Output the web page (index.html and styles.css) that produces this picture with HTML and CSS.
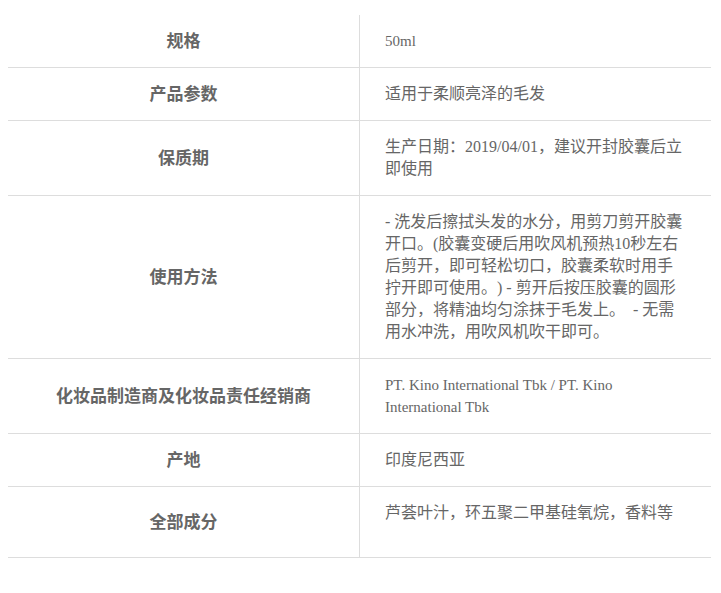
FILE: index.html
```html
<!DOCTYPE html>
<html lang="zh-CN">
<head>
<meta charset="utf-8">
<title>产品信息</title>
<link rel="stylesheet" href="styles.css">
</head>
<body>
<div class="spec">
  <div class="row">
    <div class="label">规格</div>
    <div class="value latin">50ml</div>
  </div>
  <div class="row">
    <div class="label">产品参数</div>
    <div class="value">适用于柔顺亮泽的毛发</div>
  </div>
  <div class="row">
    <div class="label">保质期</div>
    <div class="value">生产日期：2019/04/01，建议开封胶囊后立即使用</div>
  </div>
  <div class="row">
    <div class="label">使用方法</div>
    <div class="value">- 洗发后擦拭头发的水分，用剪刀剪开胶囊开口。(胶囊变硬后用吹风机预热10秒左右后剪开，即可轻松切口，胶囊柔软时用手拧开即可使用。) - 剪开后按压胶囊的圆形部分，将精油均匀涂抹于毛发上。 &nbsp;- 无需用水冲洗，用吹风机吹干即可。</div>
  </div>
  <div class="row">
    <div class="label">化妆品制造商及化妆品责任经销商</div>
    <div class="value latin">PT. Kino International Tbk / PT. Kino International Tbk</div>
  </div>
  <div class="row">
    <div class="label">产地</div>
    <div class="value">印度尼西亚</div>
  </div>
  <div class="row">
    <div class="label">全部成分</div>
    <div class="value tall">芦荟叶汁，环五聚二甲基硅氧烷，香料等</div>
  </div>
</div>
</body>
</html>
```

FILE: styles.css
```css
html, body {
  margin: 0;
  padding: 0;
  background: #ffffff;
}

body {
  padding: 15px 10px 0 8px;
}

.spec {
  width: 703px;
  color: #666666;
}

.row {
  display: grid;
  grid-template-columns: 352px 1fr;
  border-bottom: 1px solid #dddddd;
}

.label {
  display: flex;
  align-items: center;
  justify-content: center;
  padding-bottom: 3px;
  border-right: 1px solid #dddddd;
  font-family: "Noto Sans CJK SC", "Liberation Sans", sans-serif;
  font-weight: 700;
  font-size: 17px;
  color: #666666;
  text-align: center;
}

.value {
  padding: 15px 25px 15px 25px;
  font-family: "Liberation Serif", "Noto Sans CJK SC", serif;
  font-size: 16px;
  line-height: 22px;
  color: #666666;
  text-spacing-trim: space-all;
}

.value.latin {
  font-size: 15px;
}

.value.tall {
  padding-bottom: 33px;
}
```
